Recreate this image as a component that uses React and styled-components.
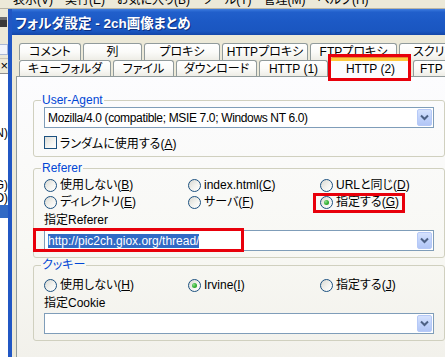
import styled, { createGlobalStyle } from "styled-components";

const GlobalStyle = createGlobalStyle`
  html, body { margin: 0; padding: 0; overflow: hidden; background: #ece9d8; }
  * { box-sizing: border-box; }
`;

const Screen = styled.div`
  width: 445px;
  height: 357px;
  position: relative;
  overflow: hidden;
  display: flex;
  flex-direction: column;
  background: #ece9d8;
  font-family: "Liberation Sans", "Noto Sans CJK JP", sans-serif;
  font-size: 12px;
  color: #000;
  font-feature-settings: "palt";
`;

const MenuStrip = styled.div`
  height: 9px;
  flex-shrink: 0;
  overflow: hidden;
  display: flex;
  gap: 12px;
  padding-left: 13px;
  border-bottom: 1px solid #b9b5a5;
`;

const MenuItem = styled.span`
  line-height: 14px;
  margin-top: -7px;
  white-space: nowrap;
`;

const Main = styled.div`
  flex: 1;
  min-height: 0;
  display: flex;
`;

/* what is left of the program window behind the dialog */
const SideStrip = styled.div`
  width: 8px;
  flex-shrink: 0;
  display: flex;
  flex-direction: column;
  overflow: hidden;
`;

const SideToolbar = styled.div`
  height: 26px;
  display: flex;
  align-items: center;
  background: #ece9d8;
`;

const SaveIcon = styled.div`
  width: 7px;
  height: 10px;
  background: #3a3a3a;
  border-top: 3px solid #6c6c6c;
`;

const SideField = styled.div`
  height: 24px;
  padding: 9px 0 3px;
  border-bottom: 1px solid #c9c5b6;
  div {
    height: 100%;
    background: #f2f5fb;
    border: 1px solid #a9b8d6;
    border-left: none;
  }
`;

const SideClose = styled.div`
  height: 14px;
  line-height: 14px;
  font-size: 13px;
  text-align: right;
`;

const SideList = styled.div`
  flex: 1;
  background: #fff;
  border-top: 1px solid #8f8f8f;
  padding-top: 1px;
`;

const SideRow = styled.div`
  height: 13px;
  line-height: 13px;
  display: flex;
  justify-content: flex-end;
  overflow: hidden;
  white-space: nowrap;
  background: ${(p) => (p.selected ? "#316ac5" : "transparent")};
`;

const Dialog = styled.div`
  flex: 1;
  min-width: 0;
  display: flex;
  flex-direction: column;
  border-left: 4px solid #2157c4;
  box-shadow: inset 1px 0 0 #4b82df;
`;

const TitleBar = styled.div`
  height: 26px;
  flex-shrink: 0;
  display: flex;
  align-items: center;
  padding-left: 3px;
  background: linear-gradient(#3d7ce0 0%, #215fcb 12%, #1c59c5 50%, #1a56c0 85%, #1446a8 100%);
  color: #fff;
  font-size: 13.5px;
  font-weight: bold;
  text-shadow: 1px 1px 0 #0d2f80;
  white-space: nowrap;
`;

const Body = styled.div`
  flex: 1;
  display: flex;
  flex-direction: column;
  padding: 8px 0 0 4px;
  background: #ece9d8;
`;

const TabStrip = styled.div`
  display: flex;
  flex-direction: column;
  padding-left: 3px;
  position: relative;
  z-index: 1;
`;

const TabRow = styled.div`
  display: flex;
  gap: 2px;
  height: ${(p) => p.h}px;
  align-items: flex-end;
`;

const Tab = styled.div`
  flex-shrink: 0;
  width: ${(p) => p.w}px;
  height: ${(p) => (p.active ? p.h + 3 : p.h)}px;
  margin: ${(p) => (p.active ? "0 0 -1px" : "0")};
  border: 1px solid #919b9c;
  border-bottom: none;
  border-radius: 3px 3px 0 0;
  border-top: ${(p) => (p.active ? "3px solid #ffc83c" : "1px solid #919b9c")};
  box-shadow: ${(p) => (p.active ? "0 -1px 0 #e68b2c" : "none")};
  background: ${(p) =>
    p.active ? "#fcfcfe" : "linear-gradient(#ffffff 0%, #fbfbf9 50%, #eeede6 100%)"};
  display: flex;
  align-items: center;
  justify-content: ${(p) => (p.left ? "flex-start" : "center")};
  padding-left: ${(p) => (p.left ? 6 : 0)}px;
  white-space: nowrap;
  overflow: hidden;
  line-height: 14px;
`;

const Panel = styled.div`
  flex: 1;
  border: 1px solid #919b9c;
  border-right: none;
  border-bottom: none;
  background: linear-gradient(#fcfcfe 0%, #f8f8f4 60%, #f2f1eb 100%);
  padding: 16px 0 0 16px;
  display: flex;
  flex-direction: column;
  align-items: flex-start;
`;

const Group = styled.fieldset`
  width: 412px;
  margin: ${(p) => p.gap || 0}px 0 0;
  padding: 0 10px 6px;
  border: 1px solid #d0d0bf;
  border-radius: 3px;
  min-width: 0;
`;

const Legend = styled.legend`
  padding: 0 1px;
  margin-left: -3px;
  line-height: 14px;
  color: #0046d5;
  white-space: nowrap;
`;

const Combo = styled.div`
  height: 21px;
  margin-top: ${(p) => p.gap || 0}px;
  border: 1px solid #7f9db9;
  background: #fff;
  display: flex;
  align-items: center;
  padding: 0 1px 0 3px;
`;

const ComboText = styled.span`
  flex: 1;
  white-space: nowrap;
  overflow: hidden;
  line-height: 14px;
  letter-spacing: ${(p) => (p.tight ? "-0.35px" : "0")};
  span {
    background: #316ac5;
    color: #fff;
  }
`;

const DropButton = styled.div`
  width: 15px;
  height: 17px;
  border: 1px solid #b6c9f7;
  border-radius: 2px;
  background: linear-gradient(#d6e2fd 0%, #c1d3fb 50%, #b2c6f6 100%);
  display: flex;
  align-items: center;
  justify-content: center;
`;

const CheckRow = styled.label`
  display: flex;
  align-items: center;
  height: 15px;
  margin-top: 7px;
  gap: 3px;
  white-space: nowrap;
`;

const CheckBox = styled.span`
  width: 13px;
  height: 13px;
  border: 1px solid #1c5180;
  background: linear-gradient(135deg, #dcdcd7 0%, #f5f5f2 60%, #ffffff 100%);
`;

const RadioGrid = styled.div`
  display: grid;
  grid-template-columns: 144px 132px auto;
  grid-auto-rows: 16px;
  row-gap: 1px;
  margin-top: ${(p) => p.gap || 0}px;
`;

const Radio = styled.label`
  display: flex;
  align-items: center;
  gap: 3px;
  white-space: nowrap;
  line-height: 14px;
`;

const RadioDot = styled.span`
  width: 13px;
  height: 13px;
  flex-shrink: 0;
  border-radius: 50%;
  border: 1px solid #1c5180;
  background: linear-gradient(135deg, #d8d8d2 0%, #f3f3ef 55%, #ffffff 100%);
  display: flex;
  align-items: center;
  justify-content: center;
  &::after {
    content: "";
    display: ${(p) => (p.checked ? "block" : "none")};
    width: 5px;
    height: 5px;
    border-radius: 50%;
    background: radial-gradient(circle at 35% 35%, #8fe08f 0%, #36b336 50%, #1e8f1e 100%);
  }
`;

const FieldLabel = styled.div`
  height: 16px;
  line-height: 16px;
  margin-top: 2px;
  white-space: nowrap;
`;

/* red annotation frames drawn over the screenshot */
const Mark = styled.div`
  position: absolute;
  left: ${(p) => p.x}px;
  top: ${(p) => p.y}px;
  width: ${(p) => p.w}px;
  height: ${(p) => p.h}px;
  border: 3px solid #e8000b;
  z-index: 5;
  pointer-events: none;
`;

const Chevron = () => (
  <svg width="9" height="7" viewBox="0 0 9 7">
    <path d="M1 1.5 L4.5 5 L8 1.5" fill="none" stroke="#4d6185" strokeWidth="2" />
  </svg>
);

/* caption with an underlined access key, e.g. 使用しない(B) */
const Caption = ({ text, k }) => (
  <span>
    {text}(<u>{k}</u>)
  </span>
);

const row1 = [
  ["コメント", 62],
  ["列", 59],
  ["プロキシ", 76],
  ["HTTPプロキシ", 86],
  ["FTPプロキシ", 87],
  ["スクリプト", 80],
];

const row2 = [
  ["キューフォルダ", 92],
  ["ファイル", 61],
  ["ダウンロード", 81],
  ["HTTP (1)", 69],
  ["HTTP (2)", 81, true],
  ["FTP", 60, false, true],
];

const menus = ["表示(V)", "実行(E)", "お気に入り(B)", "ツール(T)", "管理(M)", "ヘルプ(H)"];

const sideRows = ["", "", "", "", "名前(N)", "", "", "", "設定(G)", "名前(O)", "", "", ""];

export default function App() {
  return (
    <Screen>
      <GlobalStyle />
      <MenuStrip>
        {menus.map((m) => (
          <MenuItem key={m}>{m}</MenuItem>
        ))}
      </MenuStrip>
      <Main>
        <SideStrip>
          <SideToolbar>
            <SaveIcon />
          </SideToolbar>
          <SideField>
            <div />
          </SideField>
          <SideClose>×</SideClose>
          <SideList>
            {sideRows.map((r, i) => (
              <SideRow key={i} selected={i === 10}>
                {r}
              </SideRow>
            ))}
          </SideList>
        </SideStrip>
        <Dialog>
          <TitleBar>フォルダ設定 - 2ch画像まとめ</TitleBar>
          <Body>
            <TabStrip>
              <TabRow h={17}>
                {row1.map(([t, w]) => (
                  <Tab key={t} w={w} h={17}>
                    {t}
                  </Tab>
                ))}
              </TabRow>
              <TabRow h={16}>
                {row2.map(([t, w, a, l]) => (
                  <Tab key={t} w={w} h={16} active={a} left={l}>
                    {t}
                  </Tab>
                ))}
              </TabRow>
            </TabStrip>
            <Panel>
              <Group>
                <Legend>User-Agent</Legend>
                <Combo>
                  <ComboText tight>Mozilla/4.0 (compatible; MSIE 7.0; Windows NT 6.0)</ComboText>
                  <DropButton>
                    <Chevron />
                  </DropButton>
                </Combo>
                <CheckRow>
                  <CheckBox />
                  <Caption text="ランダムに使用する" k="A" />
                </CheckRow>
              </Group>

              <Group gap={4}>
                <Legend>Referer</Legend>
                <RadioGrid gap={2}>
                  <Radio>
                    <RadioDot />
                    <Caption text="使用しない" k="B" />
                  </Radio>
                  <Radio>
                    <RadioDot />
                    <Caption text="index.html" k="C" />
                  </Radio>
                  <Radio>
                    <RadioDot />
                    <Caption text="URLと同じ" k="D" />
                  </Radio>
                  <Radio>
                    <RadioDot />
                    <Caption text="ディレクトリ" k="E" />
                  </Radio>
                  <Radio>
                    <RadioDot />
                    <Caption text="サーバ" k="F" />
                  </Radio>
                  <Radio>
                    <RadioDot checked />
                    <Caption text="指定する" k="G" />
                  </Radio>
                </RadioGrid>
                <FieldLabel>指定Referer</FieldLabel>
                <Combo gap={2}>
                  <ComboText>
                    <span>http://pic2ch.giox.org/thread/</span>
                  </ComboText>
                  <DropButton>
                    <Chevron />
                  </DropButton>
                </Combo>
              </Group>

              <Group>
                <Legend>クッキー</Legend>
                <RadioGrid gap={5}>
                  <Radio>
                    <RadioDot />
                    <Caption text="使用しない" k="H" />
                  </Radio>
                  <Radio>
                    <RadioDot checked />
                    <Caption text="Irvine" k="I" />
                  </Radio>
                  <Radio>
                    <RadioDot />
                    <Caption text="指定する" k="J" />
                  </Radio>
                </RadioGrid>
                <FieldLabel>指定Cookie</FieldLabel>
                <Combo gap={2}>
                  <ComboText />
                  <DropButton>
                    <Chevron />
                  </DropButton>
                </Combo>
              </Group>
            </Panel>
          </Body>
        </Dialog>
      </Main>
      <Mark x={328} y={54} w={83} h={27} />
      <Mark x={313} y={193} w={92} h={20} />
      <Mark x={33} y={228} w={211} h={24} />
    </Screen>
  );
}
